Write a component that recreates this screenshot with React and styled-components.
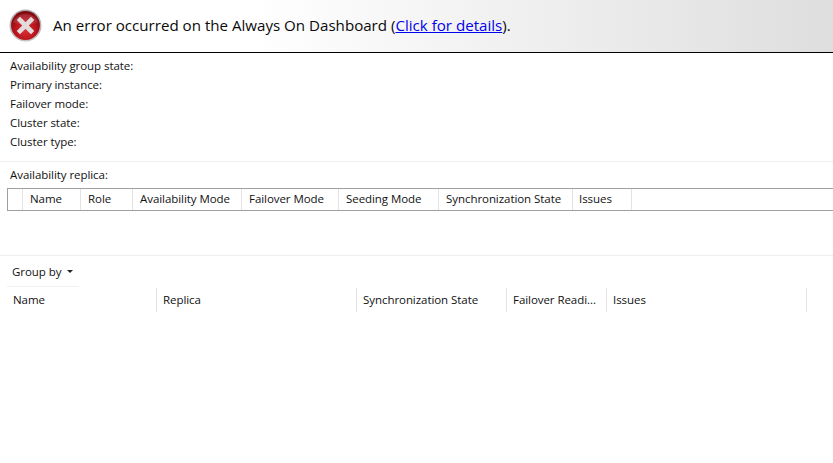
import React from "react";
import styled, { createGlobalStyle } from "styled-components";

const GlobalStyle = createGlobalStyle`
  html, body {
    margin: 0;
    padding: 0;
    background: #ffffff;
    overflow: hidden;
  }
  body {
    font-family: "Open Sans", "Liberation Sans", sans-serif;
    font-size: 11.5px;
    letter-spacing: -0.06px;
    color: #111111;
  }
`;

const Page = styled.div`
  width: 833px;
  height: 463px;
  overflow: hidden;
`;

const Banner = styled.div`
  height: 52px;
  border-bottom: 1px solid #000000;
  background: linear-gradient(to right, #ffffff 30%, #dedede 100%);
  display: flex;
  align-items: center;
  padding-left: 9px;
  gap: 11px;
`;

const IconSlot = styled.div`
  width: 33px;
  height: 33px;
  margin-bottom: 1px;
`;

const BannerText = styled.div`
  font-size: 15.12px;
  letter-spacing: 0;
  line-height: 20px;
  padding-bottom: 2px;
  color: #0a0a0a;
  a {
    color: #0000ee;
    text-decoration: underline;
  }
`;

const InfoList = styled.div`
  padding: 4px 0 9px 10px;
  border-bottom: 1px solid #eeeeee;
`;

const InfoRow = styled.div`
  height: 19px;
  line-height: 18px;
`;

const ReplicaSection = styled.div`
  height: 93px;
  border-bottom: 1px solid #eeeeee;
`;

const SectionLabel = styled.div`
  padding-left: 10px;
  height: 26px;
  line-height: 25px;
`;

const ReplicaGrid = styled.div`
  margin-left: 7px;
  height: 21px;
  display: flex;
  border: 1px solid #a0a0a0;
  border-right: none;
`;

const ReplicaCell = styled.div`
  width: ${(p) => p.$w}px;
  box-sizing: border-box;
  padding-left: ${(p) => p.$pad}px;
  line-height: 20px;
  white-space: nowrap;
  border-right: 1px solid #e3e3e3;
`;

const GroupBy = styled.div`
  width: 72px;
  height: 31px;
  margin-left: 7px;
  padding-left: 5px;
  box-sizing: border-box;
  display: flex;
  align-items: center;
  gap: 6px;
  border-bottom: 1px solid #f2f2f2;
`;

const Caret = styled.span`
  width: 0;
  height: 0;
  margin-top: 1px;
  border-left: 3px solid transparent;
  border-right: 3px solid transparent;
  border-top: 3px solid #222222;
`;

const IssueHeader = styled.div`
  display: flex;
  height: 24px;
  margin-top: 1px;
  margin-left: 7px;
`;

const IssueCell = styled.div`
  width: ${(p) => p.$w}px;
  box-sizing: border-box;
  padding-left: 6px;
  line-height: 24px;
  white-space: nowrap;
  border-right: 1px solid #e3e3e3;
`;

function ErrorIcon() {
  return (
    <svg width="33" height="33" viewBox="0 0 33 33">
      <defs>
        <radialGradient id="redFill" cx="50%" cy="65%" r="62%">
          <stop offset="0%" stopColor="#dd3138" />
          <stop offset="60%" stopColor="#b8141c" />
          <stop offset="100%" stopColor="#7e0810" />
        </radialGradient>
        <linearGradient id="rim" x1="0" y1="0" x2="0" y2="1">
          <stop offset="0%" stopColor="#a8a8a8" />
          <stop offset="100%" stopColor="#c4c4c4" />
        </linearGradient>
      </defs>
      <circle cx="16.5" cy="16.5" r="16" fill="url(#rim)" />
      <circle cx="16.5" cy="16.5" r="14.4" fill="url(#redFill)" />
      <path d="M4 13 A13 11 0 0 1 29 13 Q16.5 19 4 13Z" fill="#ffffff" opacity="0.12" />
      <path
        d="M11 11 L22 22 M22 11 L11 22"
        stroke="#e2dcdc"
        strokeWidth="4.6"
        strokeLinecap="square"
      />
    </svg>
  );
}

const infoLabels = [
  "Availability group state:",
  "Primary instance:",
  "Failover mode:",
  "Cluster state:",
  "Cluster type:",
];

const replicaColumns = [
  { w: 15, pad: 7, label: "" },
  { w: 58, pad: 7, label: "Name" },
  { w: 52, pad: 7, label: "Role" },
  { w: 109, pad: 7, label: "Availability Mode" },
  { w: 97, pad: 7, label: "Failover Mode" },
  { w: 100, pad: 7, label: "Seeding Mode" },
  { w: 134, pad: 7, label: "Synchronization State" },
  { w: 59, pad: 6, label: "Issues" },
];

const issueColumns = [
  { w: 150, label: "Name" },
  { w: 200, label: "Replica" },
  { w: 150, label: "Synchronization State" },
  { w: 100, label: "Failover Readi..." },
  { w: 200, label: "Issues" },
];

export default function App() {
  return (
    <Page>
      <GlobalStyle />
      <Banner>
        <IconSlot>
          <ErrorIcon />
        </IconSlot>
        <BannerText>
          An error occurred on the Always On Dashboard (<a href="#details">Click for details</a>).
        </BannerText>
      </Banner>
      <InfoList>
        {infoLabels.map((label) => (
          <InfoRow key={label}>{label}</InfoRow>
        ))}
      </InfoList>
      <ReplicaSection>
        <SectionLabel>Availability replica:</SectionLabel>
        <ReplicaGrid>
          {replicaColumns.map((col, i) => (
            <ReplicaCell key={i} $w={col.w} $pad={col.pad}>
              {col.label}
            </ReplicaCell>
          ))}
        </ReplicaGrid>
      </ReplicaSection>
      <GroupBy>
        Group by <Caret />
      </GroupBy>
      <IssueHeader>
        {issueColumns.map((col) => (
          <IssueCell key={col.label} $w={col.w}>
            {col.label}
          </IssueCell>
        ))}
      </IssueHeader>
    </Page>
  );
}
